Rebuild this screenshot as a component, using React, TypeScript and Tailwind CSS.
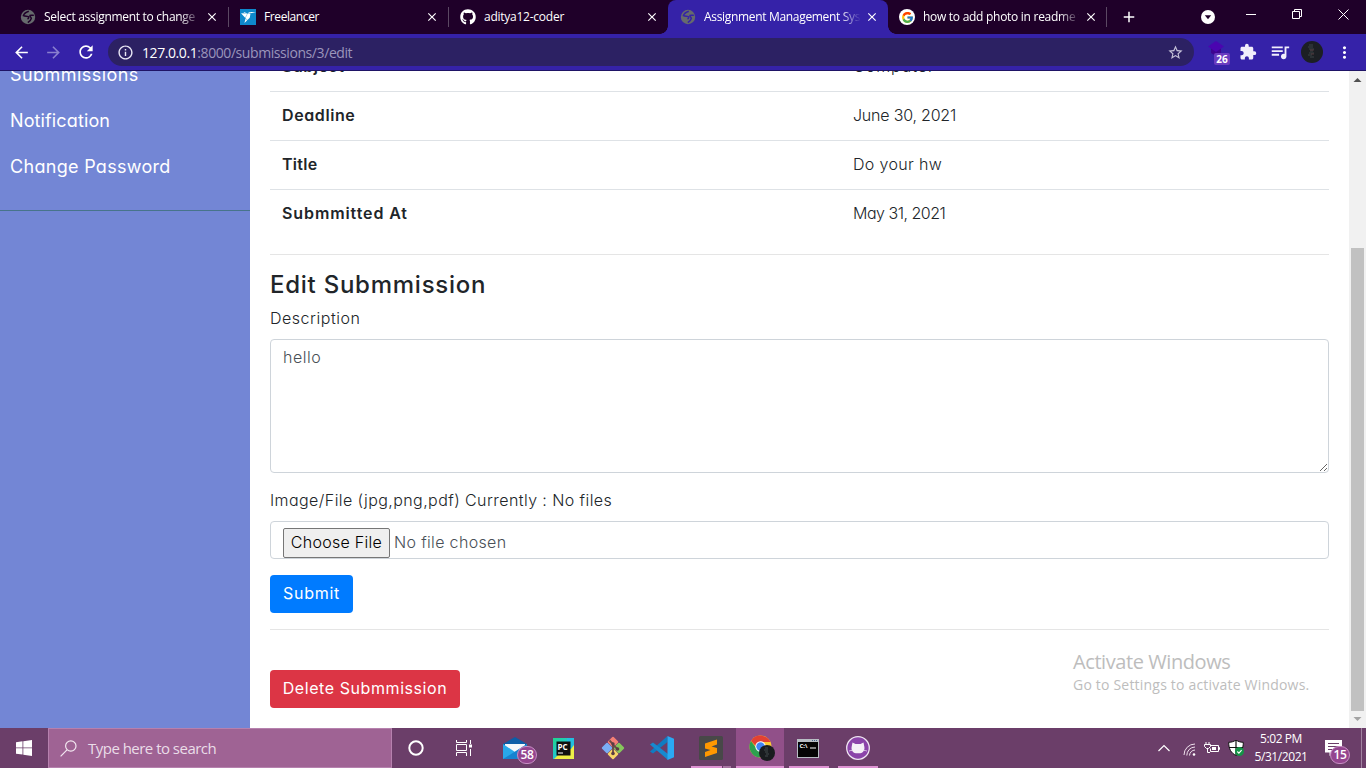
import React from "react";
import {
  MdArrowBack,
  MdArrowForward,
  MdRefresh,
  MdInfoOutline,
  MdStarBorder,
  MdExtension,
  MdQueueMusic,
  MdMoreVert,
  MdClose,
  MdAdd,
} from "react-icons/md";
import { FaGithub } from "react-icons/fa";
import { FcGoogle } from "react-icons/fc";
import { SiFreelancer } from "react-icons/si";

type TabProps = {
  icon: React.ReactNode;
  title: string;
  tracking: string;
  size?: string;
  active?: boolean;
  divider?: boolean;
  fade?: boolean;
};

function Globe({ sea }: { sea: string }) {
  return (
    <svg className="size-4" viewBox="0 0 16 16">
      <circle cx="8" cy="8" r="7.200" fill="#666a6d" />
      <path
        d="M8.800 2.200C6.500 3 4 4.300 3.400 6.600c1.600.9 3.200.5 4.800 1 1 .9.300 1.900-.700 2.400M13.800 6.200c-1.500.3-2.600-.4-3.800.2-.5 1.300 1.200 1.700 1.300 3-.2 1.800-1.700 2.900-3.500 4.200"
        fill="none"
        stroke={sea}
        strokeWidth="1.500"
      />
    </svg>
  );
}

function Tab({ icon, title, tracking, size = "w-[220px] pl-3", active, divider, fade }: TabProps) {
  return (
    <div
      className={`relative flex h-[34px] shrink-0 items-center ${size} ${
        active ? "rounded-t-lg bg-[#3522a8]" : ""
      }`}
    >
      <div className="flex size-4 shrink-0 items-center justify-center">{icon}</div>
      <div
        className={`ml-2 w-[156px] overflow-hidden whitespace-nowrap text-[12px] leading-4 text-white ${tracking} ${
          fade ? "[mask-image:linear-gradient(to_right,black_136px,transparent_157px)]" : ""
        }`}
      >
        {title}
      </div>
      <MdClose className="ml-[5px] size-[14px] text-white" />
      {divider && <div className="absolute top-[7px] right-[-1px] h-5 w-px bg-[#5b4863]" />}
      {active && (
        <>
          <div className="absolute bottom-0 -left-2 size-2 bg-[radial-gradient(circle_at_0_0,transparent_7.5px,#3522a8_8px)]" />
          <div className="absolute -right-2 bottom-0 size-2 bg-[radial-gradient(circle_at_100%_0,transparent_7.5px,#3522a8_8px)]" />
        </>
      )}
    </div>
  );
}

function TabStrip() {
  return (
    <div className="flex h-[34px] bg-[#1f0029] pl-2">
      <Tab icon={<Globe sea="#1f0029" />} title="Select assignment to change |" tracking="tracking-[-0.29px]" divider fade />
      <Tab
        icon={
          <div className="flex size-4 items-center justify-center bg-[#0e88cc]">
            <SiFreelancer className="size-[15px] text-white" />
          </div>
        }
        title="Freelancer"
        tracking="tracking-[-0.4px]"
        divider
      />
      <Tab icon={<FaGithub className="size-4 text-white" />} title="aditya12-coder" tracking="tracking-[-0.25px]" />
      <Tab icon={<Globe sea="#3522a8" />} title="Assignment Management System" tracking="tracking-[-0.32px]" active fade />
      <Tab
        icon={
          <div className="flex size-4 items-center justify-center rounded-full bg-white">
            <FcGoogle className="size-[13px]" />
          </div>
        }
        title="how to add photo in readme file"
        tracking="tracking-[-0.28px]"
        size="w-[218px] pl-[11px]"
        divider
        fade
      />
      <div className="flex w-[46px] items-center justify-center text-white">
        <MdAdd className="size-[18px]" />
      </div>
      <div className="ml-auto flex items-center">
        <svg className="mr-[31px] size-[14px]" viewBox="0 0 14 14">
          <circle cx="7" cy="7" r="7" fill="#fff" />
          <path d="M3.8 5.2h6.4L7 9.3z" fill="#1f0029" />
        </svg>
        <svg className="mr-9 mb-[6px] h-[14px] w-[10px]" viewBox="0 0 10 14">
          <path d="M0 7.5h10" stroke="#fff" />
        </svg>
        <svg className="mr-9 mb-[6px] size-[10px]" viewBox="0 0 10 10" fill="none" stroke="#fff">
          <path d="M.5 2.5h7v7h-7zM2.5 2.500v-2h7v7h-2" />
        </svg>
        <svg className="mr-[17px] mb-[5px] size-[11px]" viewBox="0 0 11 11" stroke="#fff">
          <path d="M.5.5l10 10M10.500.5l-10 10" />
        </svg>
      </div>
    </div>
  );
}

function Toolbar() {
  return (
    <div className="flex h-[37px] items-center border-b border-[#1f1466] bg-[#3522a8] text-white">
      <div className="flex w-[108px] items-center gap-[13px] pl-3">
        <MdArrowBack className="size-[19px]" />
        <MdArrowForward className="size-[19px] text-[#8a80cf]" />
        <MdRefresh className="size-[20px]" />
      </div>
      <div className="flex h-7 w-[1086px] items-center rounded-full bg-[#2c2163] pr-[10px] pl-[9px]">
        <MdInfoOutline className="size-[17px] text-[#e8e6f4]" />
        <div className="ml-2 text-[14px] tracking-[-0.42px] text-[#9b95bb]">
          <span className="text-white">127.0.0.1</span>:8000/submissions/3/edit
        </div>
        <MdStarBorder className="ml-auto size-[17px] text-[#c5c2d8]" />
      </div>
      <div className="relative ml-[14px] h-6 w-[21px]">
        <svg className="mt-px size-4" viewBox="0 0 16 16">
          <path d="M3 7v5l5 3 5-3V7z" fill="#3d0590" />
          <path d="M8 0l8 5.500-8 5.500-8-5.500z" fill="#4a05b0" />
        </svg>
        <div className="absolute top-[13px] left-[6px] flex h-3 w-4 items-center justify-center rounded-[2px] bg-[#6a3cc0] text-[10px] leading-none font-bold">
          26
        </div>
      </div>
      <MdExtension className="ml-[10px] size-[18px] text-[#f1eefb]" />
      <MdQueueMusic className="ml-3 size-[22px] text-[#f1eefb]" />
      <svg className="ml-[10px] size-[22px]" viewBox="0 0 22 22">
        <circle cx="11" cy="11" r="11" fill="#1c1f24" />
        <path d="M8 4h4M7 6h5M8 8h5M9 10h3M8 12h5M7 14h4M9 16h4" stroke="#52605e" strokeWidth=".6" />
        <path d="M9 9h4M10 13h3" stroke="#734348" strokeWidth=".6" />
      </svg>
      <MdMoreVert className="ml-[12px] size-[19px]" />
    </div>
  );
}

function Sidebar() {
  return (
    <nav className="w-[250px] shrink-0 overflow-hidden bg-[#7386d5]">
      <ul className="-mt-[19px] border-b border-[#47748b] pb-5 text-[18px] text-white">
        <li className="h-[46px] pl-[10px] leading-[46px] tracking-[0.45px]">Submmissions</li>
        <li className="h-[46px] pl-[10px] leading-[46px] tracking-[0.12px]">Notification</li>
        <li className="h-[46px] pl-[10px] leading-[46px] tracking-[0.3px]">Change Password</li>
      </ul>
    </nav>
  );
}

const rows = [
  { name: "Subject", value: "Computer", nameTracking: "tracking-[0.5px]", valueTracking: "tracking-[1px]" },
  { name: "Deadline", value: "June 30, 2021", nameTracking: "tracking-[0.6px]", valueTracking: "tracking-[-0.2px]" },
  { name: "Title", value: "Do your hw", nameTracking: "tracking-[0.3px]", valueTracking: "tracking-[0.35px]" },
  { name: "Submmitted At", value: "May 31, 2021", nameTracking: "tracking-[0.9px]", valueTracking: "tracking-[-0.5px]" },
];

function Content() {
  return (
    <main className="min-w-0 flex-1 overflow-hidden bg-white px-5 text-[16px] leading-6 font-[350] text-[#212529]">
      <div className="-mt-[29px]">
        {rows.map((r) => (
          <div key={r.name} className="flex h-[49px] border-t border-[#dee2e6] pt-[11px] pb-[13px]">
            <div className={`w-[571px] pl-3 font-semibold ${r.nameTracking}`}>{r.name}</div>
            <div className={`pl-3 ${r.valueTracking}`}>{r.value}</div>
          </div>
        ))}
      </div>
      <hr className="mt-4 border-[#e5e5e5]" />
      <h4 className="mt-4 text-[24px] leading-[28px] font-medium tracking-[0.75px]">Edit Submmission</h4>
      <div className="mt-[7px] tracking-[0.52px]">Description</div>
      <textarea
        className="mt-[9px] block h-[134px] w-full rounded border border-[#ced4da] px-3 pt-[5px] pb-[6px] tracking-[0.55px] text-[#495057] outline-none"
        defaultValue="hello"
      />
      <div className="mt-[15px] tracking-[0.42px]">Image/File (jpg,png,pdf) Currently : No files</div>
      <div className="mt-[9px] flex h-[38px] items-start overflow-hidden rounded border border-[#ced4da] px-3 pt-[6px] text-[#495057]">
        <div className="flex h-[30px] w-[107px] items-center justify-center rounded-[2px] border border-[#767676] bg-[#efefef] pb-[2px] tracking-[0.28px] text-black">
          Choose File
        </div>
        <div className="ml-1 leading-[28px] tracking-[0.34px]">No file chosen</div>
      </div>
      <button className="mt-4 flex h-[38px] w-[83px] items-center justify-center rounded bg-[#007bff] pb-[2px] font-normal tracking-[0.75px] text-white">
        Submit
      </button>
      <hr className="mt-4 border-[#e5e5e5]" />
      <button className="mt-10 flex h-[38px] w-[190px] items-center justify-center rounded bg-[#dc3545] pb-[2px] font-normal tracking-[0.57px] whitespace-nowrap text-white">
        Delete Submmission
      </button>
    </main>
  );
}

function Scrollbar() {
  return (
    <div className="flex w-[17px] shrink-0 flex-col items-center bg-[#f1f1f1]">
      <svg className="h-[17px] w-[17px]" viewBox="0 0 17 17">
        <path d="M4.500 11h8l-4-4z" fill="#505050" />
      </svg>
      <div className="mt-40 h-[463px] w-[13px] bg-[#c1c1c1]" />
      <svg className="h-[17px] w-[17px]" viewBox="0 0 17 17">
        <path d="M4.500 6h8l-4 4z" fill="#a3a3a3" />
      </svg>
    </div>
  );
}

function Badge({ children }: { children: React.ReactNode }) {
  return (
    <div className="flex h-[18px] w-5 items-center justify-center rounded-full border border-[#c78fc4] bg-[#94458f] text-[12px] leading-none font-semibold tracking-[-0.4px] text-white">
      {children}
    </div>
  );
}

function TaskButton({ children, state, gap = "" }: { children: React.ReactNode; state?: "open" | "active"; gap?: string }) {
  return (
    <div className={`relative flex h-10 w-12 shrink-0 items-center justify-center ${gap} ${state === "active" ? "bg-[#915089]" : ""}`}>
      {children}
      {state === "open" && <div className="absolute inset-x-1 bottom-0 h-[2px] bg-[#dd92d2]" />}
      {state === "active" && <div className="absolute inset-x-0 bottom-0 h-[2px] bg-[#dd92d2]" />}
    </div>
  );
}

function Taskbar() {
  return (
    <div className="flex h-10 bg-[#6b3e69] text-white">
      <div className="flex w-12 items-center justify-center">
        <svg className="size-4" viewBox="0 0 16 16" fill="#fff">
          <path d="M0 2.200L6.500 1.300V7.500H0zM7.300 1.200L16 0V7.500H7.300zM0 8.300H6.500V14.600L0 13.700zM7.300 8.300H16V16L7.300 14.700z" />
        </svg>
      </div>
      <div className="flex w-[344px] items-center border border-[#b681ae] bg-[#9f6394] pl-[11px]">
        <svg className="size-[17px]" viewBox="0 0 17 17" fill="none" stroke="#f3e8f1" strokeWidth="1.2">
          <circle cx="10.800" cy="6" r="5.200" />
          <path d="M7 9.800L.6 16.300" />
        </svg>
        <div className="ml-[11px] text-[15px] tracking-[-0.52px] text-[#eadde8]">Type here to search</div>
      </div>
      <TaskButton>
        <svg className="size-4" viewBox="0 0 16 16">
          <circle cx="8" cy="8" r="6.700" fill="none" stroke="#fff" strokeWidth="2" />
        </svg>
      </TaskButton>
      <TaskButton>
        <svg className="size-4" viewBox="0 0 16 16" fill="none" stroke="#fff">
          <path d="M.5 0v2.500h10V0M.5 4.500h10v6H.5zM.5 16v-3.500h10V16M14.500 0v4M14.500 9v7" />
          <path d="M13 4.500h3v3h-3z" fill="#fff" stroke="none" />
        </svg>
      </TaskButton>
      <div className="relative ml-[3px] flex w-12 items-center justify-center">
        <svg className="h-6 w-6" viewBox="0 0 24 24">
          <path d="M0 8L12 1l12 7v8H0z" fill="#0c5ea8" />
          <path d="M2 8h20v8H2z" fill="#f4f7fa" />
          <path d="M0 8l12 8L24 8v15H0z" fill="#28a8ea" />
          <path d="M0 23L24 8v15z" fill="#1683d0" />
        </svg>
        <div className="absolute top-[18px] left-[26px]">
          <Badge>58</Badge>
        </div>
      </div>
      <div className="flex w-12 items-center justify-center">
        <svg className="size-[21px]" viewBox="0 0 21 21">
          <defs>
            <linearGradient id="pc" x1="0" y1="0" x2="1" y2="1">
              <stop offset="0" stopColor="#20d68c" />
              <stop offset=".5" stopColor="#22c7cf" />
              <stop offset=".55" stopColor="#f5ec3d" />
              <stop offset="1" stopColor="#e8f04e" />
            </linearGradient>
          </defs>
          <rect width="21" height="21" fill="url(#pc)" />
          <path d="M14 0h7v7l-3 4h-4z" fill="#22bfe0" />
          <rect x="3.500" y="3.500" width="14" height="14" fill="#101010" />
          <text x="4.500" y="11.500" fontSize="8" fontWeight="700" fill="#fff">PC</text>
          <path d="M5 15h5" stroke="#fff" />
        </svg>
      </div>
      <div className="flex w-[52px] items-center justify-center">
        <svg className="size-6" viewBox="0 0 24 24">
          <g transform="rotate(45 12 12)">
            <rect x="3.800" y="3.800" width="8" height="8" rx="1" fill="#f47f75" />
            <rect x="12.200" y="3.800" width="8" height="8" rx="1" fill="#86c65c" />
            <rect x="3.800" y="12.200" width="8" height="8" rx="1" fill="#7aaef4" />
            <rect x="12.200" y="12.200" width="8" height="8" rx="1" fill="#f8d568" />
          </g>
          <path d="M8.500 4.500L12 8v10M12 9l4.500 4" stroke="#6a4945" strokeWidth="1.800" fill="none" />
          <circle cx="12" cy="8" r="1.700" fill="#5a3c45" />
          <circle cx="12" cy="17.500" r="1.800" fill="#5a3c45" />
          <circle cx="16.500" cy="13" r="1.800" fill="#5a3c45" />
        </svg>
      </div>
      <div className="flex w-[46px] items-center justify-center">
        <svg className="size-6" viewBox="0 0 24 24">
          <path d="M17.500 0v6L3 17.500 0 15.500z" fill="#0f7cc2" />
          <path d="M0 8.500L3 6.500 18 18v6z" fill="#1789cf" />
          <path d="M17.500 0L24 2.700v18.600L17.500 24z" fill="#2aa9f3" />
        </svg>
      </div>
      <div className="relative flex w-[51px] items-center justify-center">
        <svg className="size-6" viewBox="0 0 24 24">
          <rect width="24" height="24" rx="1.500" fill="#484848" />
          <path d="M6 7.500l12-4v5l-5.500 2 5.500 1.500v5l-12 4v-5l5.500-2L6 12.500z" fill="#ff9800" />
        </svg>
        <div className="absolute bottom-0 left-[6px] flex h-[2px] w-10 gap-px">
          <div className="w-[31px] bg-[#dd92d2]" />
          <div className="w-2 bg-[#a875a3]" />
        </div>
      </div>
      <TaskButton state="active">
        <svg className="ml-1 size-[26px]" viewBox="0 0 26 26">
          <circle cx="11.500" cy="11.500" r="11" fill="#fcc934" />
          <path d="M2 6a11 11 0 0 1 19.500 1H11.500v9z" fill="#e34133" />
          <path d="M1.900 6A11 11 0 0 0 10.500 22.500L15 14l-7 0z" fill="#2da04f" />
          <circle cx="11.500" cy="11.500" r="5.200" fill="#fff" />
          <circle cx="11.500" cy="11.500" r="4.200" fill="#4285f4" />
          <circle cx="18" cy="18" r="8" fill="#191c1f" />
          <path d="M16 13h3M15 15h4M16 17h3M17 19h3M16 21h3" stroke="#4d5958" strokeWidth=".8" />
        </svg>
      </TaskButton>
      <TaskButton state="open" gap="ml-px">
        <svg className="mr-[2px] h-[19px] w-[22px]" viewBox="0 0 22 19">
          <rect width="22" height="19" fill="#b8bec4" />
          <rect x="1" y="3" width="20" height="15" fill="#050505" />
          <path d="M15 1.500h1M17 1.500h1M19 1.500h1" stroke="#47688e" />
          <text x="2.500" y="9" fontSize="6" fontWeight="700" fill="#fff">C:\</text>
          <path d="M13 9h6" stroke="#fff" />
        </svg>
      </TaskButton>
      <TaskButton state="open" gap="ml-px">
        <svg className="size-6" viewBox="0 0 24 24">
          <circle cx="12" cy="12" r="11.300" fill="#8b44a9" stroke="#efe5f2" strokeWidth="1.300" />
          <path d="M6.500 6.500l3 1.500h5l3-1.500.7 3.500c1 4-.8 6.500-4 7.300H9.800c-3.200-.8-5-3.300-4-7.300z" fill="#f5f0f7" />
          <path d="M6 14.500c-1.200 0-2 0-3 .6M18 14.500c1.200 0 2 0 3 .6" stroke="#f5f0f7" strokeWidth=".7" fill="none" />
        </svg>
      </TaskButton>
      <div className="ml-auto flex items-center">
        <svg className="h-[8px] w-3" viewBox="0 0 12 8" fill="none" stroke="#fff" strokeWidth="1.200">
          <path d="M.5 7L6 1.500 11.500 7" />
        </svg>
        <svg className="mt-[2px] ml-[13px] size-[13px]" viewBox="0 0 13 13" fill="none" stroke="#eee0ec">
          <path d="M1 12A11 11 0 0 1 12 1M3.800 12.500A8.400 8.400 0 0 1 12 4M6.500 12.500A5.700 5.700 0 0 1 12 7" />
          <circle cx="11" cy="11.500" r="1.300" fill="#fff" stroke="none" />
        </svg>
        <svg className="ml-2 h-3 w-4" viewBox="0 0 16 12" fill="none" stroke="#fff">
          <path d="M2 0v2M5 0v2M.5 2.500h6v2l-2 2h-2l-2-2zM3.500 7v3.500H6M7 3.500h7.500v6h-8v-3M14.500 5.500h1v2h-1" />
          <path d="M8 5h4v3H8z" fill="#fff" stroke="none" />
        </svg>
        <svg className="ml-2 size-4" viewBox="0 0 16 16">
          <path d="M8 0c2 1.500 4.500 2.300 7.300 2.300C15.300 9 13 13 8 15.500 3 13 .7 9 .7 2.300 3.500 2.300 6 1.500 8 0z" fill="#fff" stroke="#111" />
          <path d="M8 0v15M1 7.500h14" stroke="#111" strokeWidth="1.200" />
          <circle cx="11.500" cy="11.500" r="4.500" fill="#159447" />
          <path d="M9.300 11.500l1.600 1.600 2.700-3" fill="none" stroke="#fff" strokeWidth="1.100" />
        </svg>
        <div className="ml-[9px] w-[56px] text-center text-[12px] leading-[18px] tracking-[-0.42px] whitespace-nowrap">
          <div>5:02 PM</div>
          <div>5/31/2021</div>
        </div>
        <div className="relative ml-4 h-6 w-[25px]">
          <svg className="mt-1 h-4 w-[17px]" viewBox="0 0 17 16">
            <path d="M0 0h17v12.500H8L4.500 16v-3.500H0z" fill="#fff" />
            <path d="M3 3.500h11M3 6.500h11M3 9.500h7" stroke="#6b3e69" />
          </svg>
          <div className="absolute top-[10px] left-[5px]">
            <Badge>15</Badge>
          </div>
        </div>
        <div className="ml-[11px] h-10 w-px bg-[#a183a0]" />
        <div className="w-1" />
      </div>
    </div>
  );
}

export default function App() {
  return (
    <div className="relative flex h-[768px] w-[1366px] flex-col overflow-hidden font-['Open_Sans',sans-serif]">
      <TabStrip />
      <Toolbar />
      <div className="flex min-h-0 flex-1 overflow-hidden font-[Inter,sans-serif] [font-feature-settings:'cv11']">
        <Sidebar />
        <Content />
        <Scrollbar />
      </div>
      <Taskbar />
      <div className="absolute top-[649px] left-[1073px] whitespace-nowrap text-[#bdbdbd]">
        <div className="text-[20px] leading-[26px] tracking-[-0.42px]">Activate Windows</div>
        <div className="text-[14px] leading-5 tracking-[0.2px]">Go to Settings to activate Windows.</div>
      </div>
    </div>
  );
}
